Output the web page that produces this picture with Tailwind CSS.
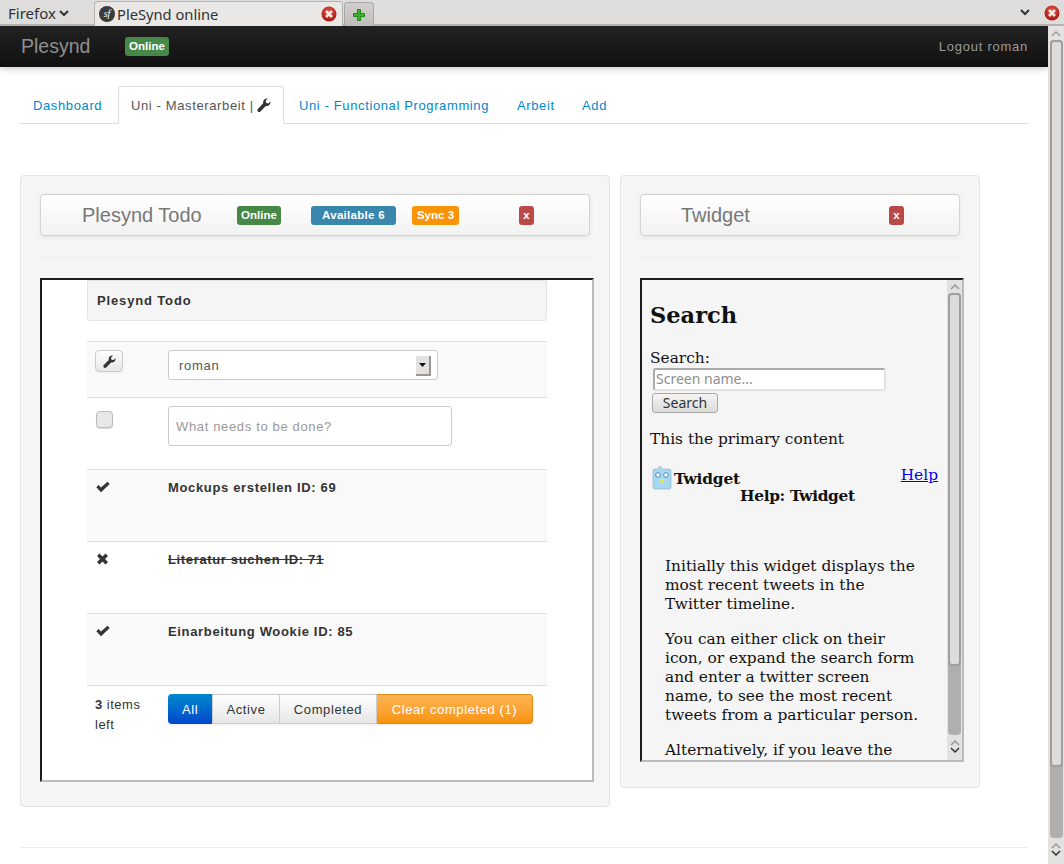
<!DOCTYPE html>
<html lang="en">
<head>
    <meta charset="UTF-8">
    <title>PleSynd online</title>
    <script src="https://cdn.jsdelivr.net/npm/@tailwindcss/browser@4"></script>
</head>
<body class="w-[1064px] h-[864px] overflow-hidden bg-white font-['Liberation_Sans',sans-serif] text-[13px] text-[#333]">
    <!-- browser chrome -->
    <div class="h-[26px] flex bg-[#dfdddb] border-b-2 border-[#b5b3b1] font-['Noto_Sans',sans-serif] text-[#2e3436] text-[15px] relative">
        <div class="w-[94px] pl-[8px] pt-[1px] flex items-center gap-[3px] h-[25px]">Firefox
            <svg width="10" height="7" viewBox="0 0 10 7"><path d="M1 1l4 4 4-4" fill="none" stroke="#2e3436" stroke-width="2"/></svg>
        </div>
        <div class="w-[249px] h-[25px] mt-[1px] flex items-center bg-[#eae8e6] border border-b-0 border-[#b5b3b1] rounded-t-[4px] pl-[4px] pr-[5px] text-[14.7px]">
            <div class="w-[16px] h-[16px] rounded-full bg-[#3a3a3a] text-white font-['Liberation_Serif',serif] italic text-[10px] leading-[15px] text-center shrink-0">sf</div>
            <span class="ml-[2px] flex-1">PleSynd online</span>
            <svg width="16" height="16" viewBox="0 0 16 16"><defs><radialGradient id="closeRed" cx="50%" cy="35%" r="65%"><stop offset="0" stop-color="#e8574a"/><stop offset="1" stop-color="#a5140f"/></radialGradient></defs><circle cx="8" cy="8" r="7.500" fill="url(#closeRed)"/><path d="M5 5l6 6M11 5l-6 6" stroke="#f7e9e4" stroke-width="2.600"/></svg>
        </div>
        <div class="w-[30px] h-[24px] ml-[1px] mt-[2px] flex items-center justify-center bg-gradient-to-b from-[#d2d0ce] to-[#bfbdbb] border border-b-0 border-[#a9a7a5] rounded-t-[4px]">
            <svg width="16" height="16" viewBox="0 0 16 16"><path d="M6.500 2.500h3v4h4v3h-4v4h-3v-4h-4v-3h4z" fill="#3fae2a" stroke="#1f8a18" stroke-linejoin="round"/></svg>
        </div>
        <div class="flex-1 flex items-center justify-end h-[25px] pr-[4px] gap-[14px]">
            <svg width="10" height="7" viewBox="0 0 10 7"><path d="M1 1l4 4 4-4" fill="none" stroke="#2e3436" stroke-width="2"/></svg>
            <svg width="16" height="16" viewBox="0 0 16 16"><circle cx="8" cy="8" r="7.500" fill="url(#closeRed)"/><path d="M5 5l6 6M11 5l-6 6" stroke="#f7e9e4" stroke-width="2.600"/></svg>
        </div>
    </div>

    <div class="flex h-[838px]">
        <div class="w-[1048px] shrink-0 overflow-hidden">
            <!-- navbar -->
            <div class="h-[41px] flex items-center px-[21px] bg-gradient-to-b from-[#222222] to-[#111111] shadow-[0_1px_8px_rgba(0,0,0,0.25)]">
                <span class="text-[19.5px] text-[#8f8f8f] w-[104px]">Plesynd</span>
                <span class="h-[19px] w-[44px] rounded-[3px] bg-[#468847] text-white text-[11.5px] font-bold leading-[18px] text-center">Online</span>
                <span class="ml-auto mr-[-1px] text-[#999999] tracking-[0.75px]">Logout roman</span>
            </div>

            <!-- tabs -->
            <div class="mx-[20px] mt-[19px] h-[38px] flex border-b border-[#dddddd] tracking-[0.62px] text-[#0088cc]">
                <a class="pl-[13px] w-[98px] leading-[39px]">Dashboard</a>
                <a class="h-[38px] w-[166px] pl-[12px] pt-px bg-white border border-[#dddddd] border-b-white rounded-t-[4px] text-[#555555] flex items-center gap-[3px]">Uni - Masterarbeit |
                    <svg class="mb-[2px]" width="14" height="14" viewBox="0 0 14 14"><path d="M13.400 3.400c.3 1.400-.1 2.800-1.100 3.700-1 1-2.300 1.200-3.500.9L3.400 13.400c-.7.7-1.800.7-2.500 0s-.7-1.800 0-2.500L6.200 5.300C5.900 4 6.200 2.700 7.100 1.700 8.100.7 9.500.3 10.800.6L8.700 2.700l.4 2.300 2.300.4z" fill="#333"/></svg>
                </a>
                <a class="pl-[15px] w-[219px] leading-[39px]">Uni - Functional Programming</a>
                <a class="pl-[14px] w-[79px] leading-[39px]">Arbeit</a>
                <a class="leading-[39px]">Add</a>
            </div>

            <!-- widgets -->
            <div class="flex items-start gap-[10px] ml-[20px] mt-[51px]">
                <div class="w-[590px] h-[632px] bg-[#f5f5f5] border border-[#e3e3e3] rounded-[4px] pl-[19px] pt-[18px]">
                    <div class="w-[550px] h-[42px] flex items-center rounded-[4px] border border-[#d4d4d4] bg-gradient-to-b from-white to-[#f2f2f2] shadow-[0_1px_4px_rgba(0,0,0,0.07)] pl-[41px]">
                        <span class="text-[20px] text-[#777777] w-[155px]">Plesynd Todo</span>
                        <span class="h-[19px] w-[44px] rounded-[3px] bg-[#468847] text-white text-[11.5px] font-bold leading-[18px] text-center">Online</span>
                        <span class="h-[19px] w-[85px] ml-[30px] rounded-[3px] bg-[#3a87ad] text-white text-[11.5px] font-bold leading-[18px] text-center tracking-[0.3px]">Available 6</span>
                        <span class="h-[19px] w-[47px] ml-[16px] rounded-[3px] bg-[#f89406] text-white text-[11.5px] font-bold leading-[18px] text-center">Sync 3</span>
                        <span class="h-[19px] w-[15px] ml-[60px] rounded-[3px] bg-[#b94a48] text-white text-[11.5px] font-bold leading-[18px] text-center">x</span>
                    </div>
                    <div class="w-[550px] h-px bg-[#eeeeee] mt-[21px]"></div>
                    <!-- todo frame -->
                    <div class="w-[554px] h-[504px] mt-[20px] bg-white border-2 border-t-[#1c1c1c] border-l-[#1c1c1c] border-r-[#bbbbbb] border-b-[#bbbbbb] overflow-hidden pl-[45px]">
                        <div class="w-[460px] h-[41px] bg-[#f5f5f5] border border-[#e3e3e3] rounded-b-[3px] pl-[9px] font-bold leading-[39px] tracking-[0.85px]">Plesynd Todo</div>
                        <div class="w-[460px] mt-[20px]">
                            <div class="h-[56px] bg-[#f9f9f9] border-t border-[#dddddd] flex pt-[8px]">
                                <div class="w-[81px] pl-[8px]">
                                    <div class="w-[28px] h-[22px] rounded-[4px] border border-[#cccccc] bg-gradient-to-b from-white to-[#e6e6e6] flex items-center justify-center shadow-[0_1px_2px_rgba(0,0,0,0.05)]">
                                        <svg width="13" height="13" viewBox="0 0 14 14"><path d="M13.400 3.400c.3 1.400-.1 2.800-1.100 3.700-1 1-2.300 1.200-3.500.9L3.400 13.400c-.7.7-1.800.7-2.500 0s-.7-1.800 0-2.500L6.200 5.300C5.900 4 6.200 2.700 7.100 1.700 8.100.7 9.500.3 10.800.6L8.700 2.700l.4 2.300 2.300.4z" fill="#333"/></svg>
                                    </div>
                                </div>
                                <div class="w-[270px] h-[30px] bg-white border border-[#cccccc] rounded-[3px] flex items-center pl-[10px] pr-[6px] pt-px tracking-[0.7px] text-[#555555]">
                                    <span class="flex-1">roman</span>
                                    <span class="w-[15px] h-[20px] bg-[#e4e2e0] border-r-2 border-b-2 border-[#9a9896] flex items-center justify-center">
                                        <svg width="7" height="4" viewBox="0 0 7 4"><path d="M0 0h7L3.500 4z" fill="#111"/></svg>
                                    </span>
                                </div>
                            </div>
                            <div class="h-[72px] border-t border-[#dddddd] flex pt-[8px]">
                                <div class="w-[81px] pl-[9px] pt-[5px]">
                                    <div class="w-[17px] h-[17px] rounded-[4px] border border-[#bdbbb9] bg-[#e9e8e6] shadow-[0_1px_1px_rgba(0,0,0,0.15)]"></div>
                                </div>
                                <div class="w-[284px] h-[40px] bg-white border border-[#cccccc] rounded-[3px] pl-[7px] leading-[39px] text-[#999999] tracking-[0.65px]">What needs to be done?</div>
                            </div>
                            <div class="h-[72px] bg-[#f9f9f9] border-t border-[#dddddd] flex pt-[8px] font-bold tracking-[0.66px]">
                                <div class="w-[81px] pl-[9px] pt-[2px]">
                                    <svg width="14" height="14" viewBox="0 0 14 14"><path d="M0.300 7.300L2.500 5.100 5 7.600 11.500 1.800 13.700 4 5 12.200z" fill="#333"/></svg>
                                </div>
                                <span>Mockups erstellen ID: 69</span>
                            </div>
                            <div class="h-[72px] border-t border-[#dddddd] flex pt-[8px] font-bold tracking-[0.65px]">
                                <div class="w-[81px] pl-[9px] pt-[2px]">
                                    <svg width="14" height="14" viewBox="0 0 14 14"><path d="M1 4l2.500-2.500L6.500 4.500 9.500 1.500 12 4 9 7l3 3-2.500 2.500L6.500 9.500l-3 3L1 10l3-3z" fill="#333"/></svg>
                                </div>
                                <span class="line-through">Literatur suchen ID: 71</span>
                            </div>
                            <div class="h-[72px] bg-[#f9f9f9] border-t border-[#dddddd] flex pt-[8px] font-bold tracking-[0.66px]">
                                <div class="w-[81px] pl-[9px] pt-[2px]">
                                    <svg width="14" height="14" viewBox="0 0 14 14"><path d="M0.300 7.300L2.500 5.100 5 7.600 11.500 1.800 13.700 4 5 12.200z" fill="#333"/></svg>
                                </div>
                                <span>Einarbeitung Wookie ID: 85</span>
                            </div>
                            <div class="border-t border-[#dddddd] flex pt-[8px]">
                                <div class="w-[81px] pl-[8px] leading-[20px] tracking-[0.5px] pt-[1px]"><b>3</b> items<br>left</div>
                                <div class="flex h-[30px] rounded-[4px] shadow-[0_1px_3px_rgba(0,0,0,0.08)] tracking-[0.6px]">
                                    <span class="w-[44px] rounded-l-[4px] bg-gradient-to-b from-[#0088cc] to-[#0044cc] text-white text-center leading-[31px]">All</span>
                                    <span class="w-[68px] border border-[#cccccc] bg-gradient-to-b from-white to-[#e6e6e6] text-center leading-[29px]">Active</span>
                                    <span class="w-[97px] border border-l-0 border-[#cccccc] bg-gradient-to-b from-white to-[#e6e6e6] text-center leading-[29px]">Completed</span>
                                    <span class="w-[156px] rounded-r-[4px] border border-[#e08a12] border-l-0 bg-gradient-to-b from-[#fbb450] to-[#f89406] text-white text-center leading-[29px]">Clear completed (1)</span>
                                </div>
                            </div>
                        </div>
                    </div>
                </div>

                <div class="w-[360px] h-[613px] bg-[#f5f5f5] border border-[#e3e3e3] rounded-[4px] pl-[19px] pt-[18px]">
                    <div class="w-[320px] h-[42px] flex items-center rounded-[4px] border border-[#d4d4d4] bg-gradient-to-b from-white to-[#f2f2f2] shadow-[0_1px_4px_rgba(0,0,0,0.07)] pl-[40px]">
                        <span class="text-[20px] text-[#777777] w-[208px]">Twidget</span>
                        <span class="h-[19px] w-[15px] rounded-[3px] bg-[#b94a48] text-white text-[11.5px] font-bold leading-[18px] text-center">x</span>
                    </div>
                    <div class="w-[320px] h-px bg-[#eeeeee] mt-[21px]"></div>
                    <!-- twidget frame -->
                    <div class="w-[324px] h-[484px] mt-[20px] flex border-2 border-t-[#1c1c1c] border-l-[#1c1c1c] border-r-[#bbbbbb] border-b-[#bbbbbb] overflow-hidden font-['DejaVu_Serif',serif] text-[15.4px] leading-[19px] text-[#111111]">
                        <div class="w-[305px] shrink-0 pl-[8px] pr-[8px] overflow-hidden">
                            <h1 class="text-[22.5px] font-bold leading-[30px] mt-[20px]">Search</h1>
                            <div class="mt-[19px]">Search:</div>
                            <div class="w-[233px] h-[23px] ml-[3px] bg-white border-2 border-t-[#aaaaaa] border-l-[#aaaaaa] border-r-[#e2e2e2] border-b-[#e2e2e2] rounded-[3px] font-['Noto_Sans',sans-serif] text-[14px] leading-[18px] text-[#8f8f8f] pl-[1px]">Screen name...</div>
                            <div class="w-[66px] h-[20px] ml-[2px] mt-[2px] border border-[#a9a7a5] rounded-[3px] bg-gradient-to-b from-[#f6f5f4] to-[#dddbd9] font-['Noto_Sans',sans-serif] text-[14px] leading-[17px] text-center text-[#2e3436]">Search</div>
                            <p class="mt-[17px]">This the primary content</p>
                            <div class="flex items-start mt-[17px] h-[24px]">
                                <svg class="ml-[2px] shrink-0" width="20" height="24" viewBox="0 0 20 24"><path d="M8 0l3 3h6a2 2 0 012 2v16a2 2 0 01-2 2H3a2 2 0 01-2-2V5a2 2 0 012-2h3z" fill="#a5d8f3" stroke="#8fa9b5" stroke-width=".6"/><circle cx="6" cy="9" r="2.300" fill="#fff" stroke="#4a86b5"/><circle cx="14" cy="9" r="2.300" fill="#fff" stroke="#4a86b5"/><path d="M7 13h6l-3 5z" fill="#f4e04d"/></svg>
                                <b class="mt-[4px] ml-[2px] tracking-[-0.2px]">Twidget</b>
                                <a class="ml-auto mr-[1px] text-[#0000ee] underline">Help</a>
                            </div>
                            <div class="font-bold pl-[90px] mt-[-3px] tracking-[-0.35px]">Help: Twidget</div>
                            <div class="pl-[15px] pr-[20px] mt-[51px]">
                                <p>Initially this widget displays the most recent tweets in the Twitter timeline.</p>
                                <p class="mt-[16px]">You can either click on their icon, or expand the search form and enter a twitter screen name, to see the most recent tweets from a particular person.</p>
                                <p class="mt-[16px]">Alternatively, if you leave the</p>
                            </div>
                        </div>
                        <div class="w-[15px] shrink-0 bg-[#e4e2e0] flex flex-col items-center">
                            <svg class="mt-[3px] mb-[3px]" width="10" height="7" viewBox="0 0 10 7"><path d="M1 6l4-4 4 4" fill="none" stroke="#9a9896" stroke-width="1.500"/></svg>
                            <div class="w-[13px] h-[442px] rounded-[4px] bg-[#b1afad] shrink-0">
                                <div class="w-[13px] h-[373px] rounded-[4px] border-2 border-[#a09e9c] bg-[#dedcda]"></div>
                            </div>
                            <svg class="mt-[4px]" width="10" height="7" viewBox="0 0 10 7"><path d="M1 6l4-4 4 4" fill="none" stroke="#9a9896" stroke-width="1.500"/></svg>
                            <svg class="mt-[1px]" width="10" height="7" viewBox="0 0 10 7"><path d="M1 1l4 4 4-4" fill="none" stroke="#2e3436" stroke-width="1.500"/></svg>
                        </div>
                    </div>
                </div>
            </div>

            <div class="mx-[20px] h-px bg-[#eeeeee] mt-[40px]"></div>
        </div>

        <!-- page scrollbar -->
        <div class="w-[16px] shrink-0 bg-[#e4e2e0] flex flex-col items-center">
            <svg class="mt-[4px] mb-[3px]" width="10" height="7" viewBox="0 0 10 7"><path d="M1 6l4-4 4 4" fill="none" stroke="#9a9896" stroke-width="1.500"/></svg>
            <div class="w-[13px] h-[798px] rounded-[4px] bg-[#b1afad] shrink-0">
                <div class="w-[13px] h-[727px] rounded-[4px] border-2 border-[#a09e9c] bg-[#dedcda]"></div>
            </div>
            <svg class="mt-[4px]" width="10" height="7" viewBox="0 0 10 7"><path d="M1 6l4-4 4 4" fill="none" stroke="#9a9896" stroke-width="1.500"/></svg>
            <svg class="mt-[1px]" width="10" height="7" viewBox="0 0 10 7"><path d="M1 1l4 4 4-4" fill="none" stroke="#2e3436" stroke-width="1.500"/></svg>
        </div>
    </div>
</body>
</html>
